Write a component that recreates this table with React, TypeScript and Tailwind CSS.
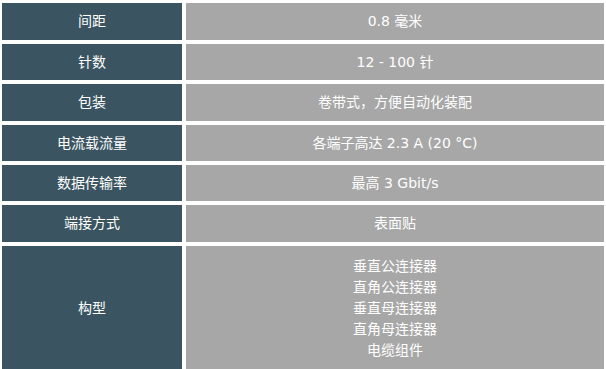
import React from "react";

const specs = [
  { label: "间距", value: ["0.8 毫米"], h: "h-[37px]" },
  { label: "针数", value: ["12 - 100 针"], h: "h-[36px]" },
  { label: "包装", value: ["卷带式，方便自动化装配"], h: "h-[37px]" },
  { label: "电流载流量", value: ["各端子高达 2.3 A (20 °C)"], h: "h-[36px]" },
  { label: "数据传输率", value: ["最高 3 Gbit/s"], h: "h-[36px]" },
  { label: "端接方式", value: ["表面贴"], h: "h-[37px]" },
  {
    label: "构型",
    value: ["垂直公连接器", "直角公连接器", "垂直母连接器", "直角母连接器", "电缆组件"],
    h: "h-[124px]",
  },
];

const App = () => {
  return (
    <div
      className="w-[606px] h-[369px] overflow-hidden bg-white pl-[2px] pt-[3px] text-[14px] text-white"
      style={{ fontFamily: '"DejaVu Sans", "Noto Sans CJK SC", sans-serif' }}
    >
      <div className="grid grid-cols-[180px_418px] gap-x-[4px] gap-y-[4px]">
        {specs.map((item, index) => (
          <React.Fragment key={index}>
            <div
              className={`${item.h} bg-[#3a5561] flex items-center justify-center`}
            >
              {item.label}
            </div>
            <div
              className={`${item.h} bg-[#a7a7a7] flex flex-col items-center justify-center leading-[21px]`}
            >
              {item.value.map((line, i) => (
                <div key={i}>{line}</div>
              ))}
            </div>
          </React.Fragment>
        ))}
      </div>
    </div>
  );
};

export default App;
